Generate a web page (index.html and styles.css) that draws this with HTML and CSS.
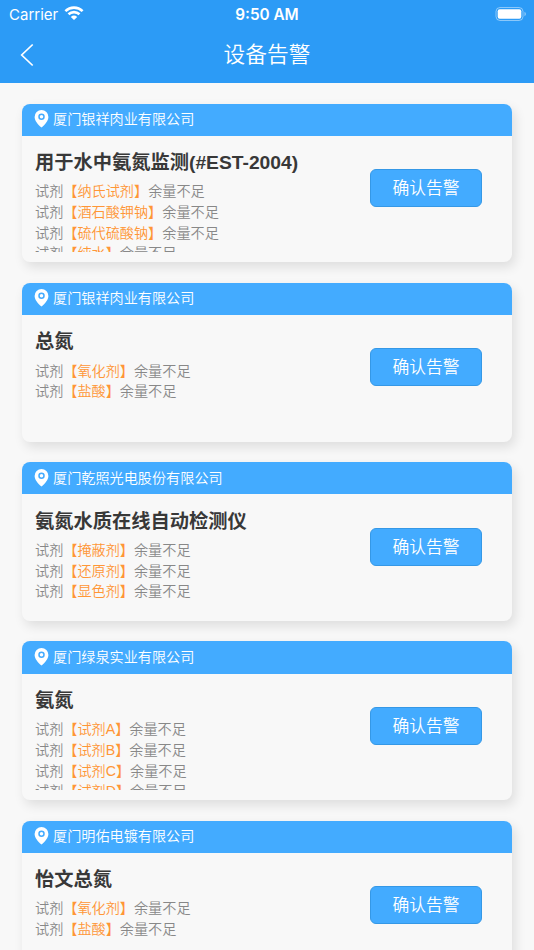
FILE: index.html
```html
<!DOCTYPE html>
<html lang="zh-CN"><head><meta charset="utf-8"><title>设备告警</title><link rel="stylesheet" href="styles.css"></head>
<body>
<header class="header">
<div class="status"><span class="carrier">Carrier<svg class="wifi" viewBox="0 0 20 14"><path d="M10 14 6.800 10.900a4.700 4.700 0 0 1 6.400 0Z" fill="#fff"/><path d="M4.500 8.300a8 8 0 0 1 11 0M1.400 5.100a12.400 12.400 0 0 1 17.200 0" fill="none" stroke="#fff" stroke-width="2.600"/></svg></span><span class="time">9:50 AM</span>
<svg class="battery" viewBox="0 0 32 14"><rect x="1" y=".5" width="27" height="13" rx="4" fill="none" stroke="#fff" stroke-opacity=".45"/><rect x="2.700" y="2.200" width="23.600" height="9.600" rx="2" fill="#fff"/><path d="M29.500 4.700a2.600 2.600 0 0 1 0 4.600Z" fill="#fff" fill-opacity=".5"/></svg></div>
<nav class="nav"><svg class="back" viewBox="0 0 14 24"><path d="M12.700 1.500 1.700 12l11 10.500" fill="none" stroke="#fff" stroke-width="1.700"/></svg><h1 class="title">设备告警</h1></nav>
</header>
<main class="list" id="list"></main>
<script src="app.js"></script>
</body></html>
```
FILE: app.js
```js
const alarms = [
  ["厦门银祥肉业有限公司", "用于水中氨氮监测(#EST-2004)", ["纳氏试剂", "酒石酸钾钠", "硫代硫酸钠", "纯水"]],
  ["厦门银祥肉业有限公司", "总氮", ["氧化剂", "盐酸"]],
  ["厦门乾照光电股份有限公司", "氨氮水质在线自动检测仪", ["掩蔽剂", "还原剂", "显色剂"]],
  ["厦门绿泉实业有限公司", "氨氮", ["试剂A", "试剂B", "试剂C", "试剂D"]],
  ["厦门明佑电镀有限公司", "怡文总氮", ["氧化剂", "盐酸"]]
];
document.getElementById("list").innerHTML = alarms.map(([company, device, items]) => `
<article class="card">
  <div class="company"><svg class="pin" viewBox="0 0 14 18"><path d="M7 0a6.900 6.900 0 0 1 6.900 6.900C13.900 10.500 10.500 14.500 7 17.500 3.500 14.500.1 10.500.1 6.900A6.900 6.900 0 0 1 7 0Z" fill="#fff"/><circle cx="7" cy="6.800" r="2.500" fill="#fff" stroke="#43abff" stroke-width="1.500"/></svg><span class="company-name">${company}</span></div>
  <div class="body"><div class="info"><h2 class="device">${device}</h2><div class="reagents">${items.map(i => `<p class="line">试剂<span class="name">【${i}】</span>余量不足</p>`).join("")}</div></div>
  <button class="confirm">确认告警</button></div>
</article>`).join("");
```
FILE: styles.css
```css
* { box-sizing: border-box; }
body { margin: 0; height: 950px; overflow: hidden; background: #f8f8f8; font-family: "Liberation Sans", "Noto Sans CJK SC", sans-serif; font-weight: 350; }
.header { height: 82.500px; background: #2c9bf6; color: #fff; }
.status { height: 28px; display: grid; grid-template-columns: 1fr auto 1fr; align-items: center; padding: 0 7px 0 9px; font-family: Inter, sans-serif; font-size: 15px; font-weight: 400; }
.carrier { display: flex; align-items: center; gap: 6px; }
.wifi { width: 20px; height: 14px; margin-top: -2px; }
.time { font-weight: 600; font-size: 15.300px; margin-right: 2px; }
.battery { width: 32px; height: 14px; justify-self: end; margin-top: -1px; }
.nav { height: 53px; display: grid; grid-template-columns: 1fr auto 1fr; align-items: center; padding: 0 20px; }
.back { width: 14px; height: 24px; }
.title { margin: 0; font-size: 21.700px; line-height: 30px; font-weight: 350; }
.list { padding: 21px 22px; display: flex; flex-direction: column; gap: 20.500px; }
.card { height: 158.800px; flex: none; border-radius: 8px; overflow: hidden; background: #f8f8f8; box-shadow: 3px 5px 12px rgba(0,0,0,.11); }
.company { height: 32.300px; display: flex; align-items: center; gap: 4px; padding-left: 12px; background: #43abff; color: #fff; font-size: 14.150px; }
.company-name { line-height: 20px; padding-bottom: 1px; }
.pin { width: 15px; height: 18px; margin-top: -1px; }
.body { height: 116px; display: flex; justify-content: space-between; padding: 13.300px 30px 0 13px; }
.device { margin: 0 0 4.200px; color: #383838; font-size: 19.250px; line-height: 28px; font-weight: 700; white-space: nowrap; }
.reagents { height: 70.500px; overflow: hidden; }
.line { margin: 0; height: 20.700px; line-height: 20.700px; color: #888; font-size: 14.150px; white-space: nowrap; }
.name { color: #ff9636; }
.confirm { width: 112px; height: 38px; margin-top: 20px; padding: 0 0 2px; border: 1px solid #3598e6; border-radius: 6px; background: #43abff; color: #fff; font: inherit; font-size: 16.800px; }
```
